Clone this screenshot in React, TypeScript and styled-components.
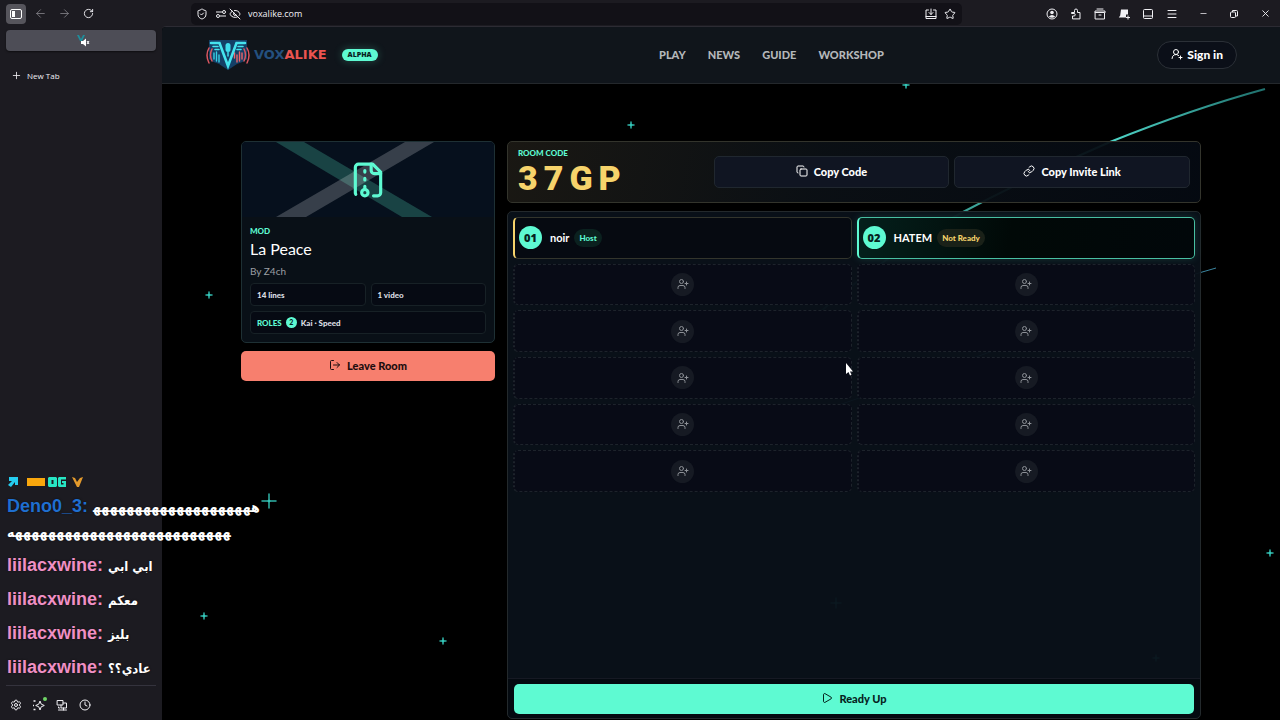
import React from "react";
import styled, { createGlobalStyle, css } from "styled-components";
import {
  ArrowLeft,
  ArrowRight,
  Clock,
  Copy,
  EyeOff,
  Link,
  LogOut,
  Menu,
  Minus,
  Play,
  Plus,
  RotateCw,
  Settings,
  ShieldCheck,
  Star,
  UserPlus,
  UserRoundPlus,
  X,
} from "lucide-react";

const mint = "#5efad2";
const gold = "#f6d36b";

const GlobalStyle = createGlobalStyle`
  * { box-sizing: border-box; }
  body {
    margin: 0;
    background: #000;
    color: #fff;
    font-family: Lato, "Open Sans", sans-serif;
  }
  button, input { font: inherit; color: inherit; margin: 0; }
  button { border: 0; padding: 0; background: none; cursor: pointer; }
  h1, h2, p, ul { margin: 0; padding: 0; }
  ul { list-style: none; }
  svg { display: block; flex: none; }
`;

/* ---------- browser window ---------- */

const Window = styled.div`
  position: relative;
  min-height: 100vh;
  display: flex;
  flex-direction: column;
  overflow: hidden;
  background: #1c1b21;
  font-family: "Open Sans", sans-serif;
`;

const Toolbar = styled.div`
  height: 26px;
  display: flex;
  align-items: center;
  padding: 1px 5px 0 0;
`;

const NavButtons = styled.div`
  width: 191px;
  display: flex;
  align-items: center;
  gap: 4px;
  padding-left: 6px;
`;

const IconButton = styled.button<{ $active?: boolean; $dim?: boolean }>`
  width: 20px;
  height: 20px;
  display: grid;
  place-items: center;
  border-radius: 4px;
  color: ${(p) => (p.$dim ? "#85848a" : "#f0f0f4")};
  background: ${(p) => (p.$active ? "#56555c" : "transparent")};
`;

const AddressBar = styled.div`
  flex: 1;
  max-width: 771px;
  height: 22px;
  display: flex;
  align-items: center;
  gap: 7px;
  padding: 0 6px 0 5px;
  border-radius: 5px;
  background: #121117;
  color: #f0f0f4;
`;

const SiteControls = styled.div`
  display: flex;
  gap: 2px;
`;

const AddressInput = styled.input`
  flex: 1;
  min-width: 0;
  border: 0;
  outline: 0;
  padding: 0;
  background: transparent;
  font-size: 9px;
  line-height: 12px;
`;

const ToolGroup = styled.div`
  margin-left: auto;
  display: flex;
  gap: 4px;
`;

const WindowGroup = styled.div`
  margin-left: 11px;
  display: flex;
  gap: 11px;
`;

const Body = styled.div`
  flex: 1;
  display: flex;
`;

const Sidebar = styled.aside`
  width: 162px;
  flex: none;
  display: flex;
  flex-direction: column;
  padding: 4px 6px 5px;
`;

const Tab = styled.button`
  height: 21px;
  display: grid;
  place-items: center;
  padding: 3px 0 0 6px;
  border-radius: 4px;
  background: #4d4d56;
  box-shadow: 0 1px 2px #0008;
`;

const NewTab = styled.button`
  height: 20px;
  margin-top: 14px;
  padding-left: 5px;
  display: flex;
  align-items: center;
  gap: 5px;
  font-size: 8px;
  color: #f0f0f4;
`;

const SidebarTools = styled.div`
  margin-top: auto;
  padding-top: 9px;
  display: flex;
  gap: 3px;
  border-top: 1px solid #34333d;
`;

/* ---------- site ---------- */

const Site = styled.div`
  position: relative;
  flex: 1;
  min-width: 0;
  display: flex;
  flex-direction: column;
  border-top: 1px solid #2c2b33;
  border-top-left-radius: 4px;
  background: #000;
  font-family: Lato, sans-serif;
`;

const Sky = styled.svg`
  position: absolute;
  left: 0;
  top: 0;
  overflow: visible;
`;

const SiteHeader = styled.header`
  position: relative;
  height: 57px;
  display: flex;
  align-items: center;
  justify-content: space-between;
  padding: 0 43px 0 44px;
  background: #10151b;
  border-bottom: 1px solid #24282c;
  border-top-left-radius: 4px;
`;

const Brand = styled.a`
  display: flex;
  align-items: center;
  padding-right: 8px;
  color: inherit;
  text-decoration: none;
`;

const Wordmark = styled.span`
  margin-left: 4px;
  font: bold 13px/16px "DejaVu Sans", sans-serif;
  color: #24507f;
  b { color: #ea5450; }
`;

const AlphaTag = styled.span`
  margin-left: 15px;
  height: 12px;
  padding: 0 6px;
  border-radius: 6px;
  background: ${mint};
  box-shadow: 0 0 8px #5efad240;
  color: #06231d;
  font: 800 7px/12px "Open Sans", sans-serif;
`;

const MainNav = styled.nav`
  display: flex;
  gap: 22px;
  a {
    color: #b4b7ba;
    font-size: 11px;
    font-weight: 900;
    line-height: 14px;
    text-decoration: none;
  }
`;

const SignIn = styled.button`
  height: 28px;
  padding: 0 13px 2px;
  display: flex;
  align-items: center;
  gap: 4px;
  border: 1px solid #2b3037;
  border-radius: 14px;
  background: #0b0f18;
  font-size: 12px;
  font-weight: 900;
`;

const Main = styled.main`
  position: relative;
  flex: 1;
  width: 100%;
  max-width: 960px;
  margin: 0 auto;
  padding: 57px 0 1px;
  display: grid;
  grid-template-columns: 254px minmax(0, 1fr);
  gap: 12px;
`;

const Column = styled.div`
  display: flex;
  flex-direction: column;
  gap: 8px;
`;

const panel = css`
  border: 1px solid #23292c;
  border-radius: 5px;
`;

const ModCard = styled.section`
  ${panel}
  border-color: #1e3034;
  overflow: hidden;
  background: #091017;
`;

const Cover = styled.div`
  height: 75px;
  display: grid;
  place-items: center;
  background: #06101d;
  color: ${mint};
  > svg { grid-area: 1 / 1; }
`;

const ModBody = styled.div`
  padding: 8px;
`;

const Label = styled.p`
  color: ${mint};
  font-size: 8px;
  font-weight: 900;
  line-height: 12px;
`;

const ModTitle = styled.h1`
  margin-top: 1px;
  font-size: 16px;
  font-weight: 400;
  line-height: 22px;
`;

const Author = styled.p`
  margin-top: 4px;
  color: #9b9fa4;
  font-size: 10px;
  line-height: 14px;
`;

const Facts = styled.div`
  margin-top: 5px;
  display: grid;
  grid-template-columns: 1fr 1fr;
  gap: 5px;
`;

const Fact = styled.div<{ $wide?: boolean }>`
  height: 23px;
  grid-column: ${(p) => (p.$wide ? "1 / -1" : "auto")};
  display: flex;
  align-items: center;
  gap: 4px;
  padding: 0 6px;
  border: 1px solid #172126;
  border-radius: 4px;
  background: #060a13;
  color: #dcdfe3;
  font-size: 8px;
  font-weight: 900;
`;

const Count = styled.span`
  width: 11px;
  height: 11px;
  border-radius: 50%;
  background: ${mint};
  color: #06231d;
  font-size: 7px;
  font-weight: 900;
  line-height: 11px;
  text-align: center;
`;

const ActionButton = styled.button<{ $tone: "coral" | "mint" | "dark" }>`
  height: ${(p) => (p.$tone === "dark" ? 32 : 30)}px;
  display: flex;
  align-items: center;
  justify-content: center;
  gap: 6px;
  padding-bottom: 2px;
  border-radius: 5px;
  font-size: 11px;
  font-weight: 900;
  ${(p) =>
    p.$tone === "coral"
      ? css`background: #f77f6e; color: #1c0d0f;`
      : p.$tone === "mint"
        ? css`background: ${mint}; color: #06231d;`
        : css`background: #101522; color: #fff; border: 1px solid #20272f;`}
`;

const CodePanel = styled.section`
  ${panel}
  height: 62px;
  display: grid;
  grid-template-columns: 2fr 5fr;
  align-items: center;
  gap: 5px;
  padding: 0 10px;
  border-color: #33342c;
  background: linear-gradient(100deg, #1b1914f2, #0b1015f2 45%, #050a12f2);
`;

const Code = styled.p`
  color: ${gold};
  font-family: Roboto, sans-serif;
  font-size: 34px;
  font-weight: 900;
  line-height: 38px;
  letter-spacing: 6px;
`;

const CodeActions = styled.div`
  display: grid;
  grid-template-columns: 1fr 1fr;
  gap: 5px;
`;

const RoomPanel = styled.section`
  ${panel}
  flex: 1;
  display: flex;
  flex-direction: column;
  background: #091119f5;
`;

const Slots = styled.ul`
  flex: none;
  min-height: 275px;
  margin: 5px;
  display: grid;
  grid-template-columns: 1fr 1fr;
  grid-template-rows: repeat(6, 1fr);
  gap: 5px;
`;

const slotBase = css`
  display: flex;
  align-items: center;
  border-radius: 5px;
`;

const Player = styled.li<{ $self?: boolean }>`
  ${slotBase}
  padding-left: 4px;
  border: 1px solid ${(p) => (p.$self ? "#48bfa2" : "#33352c")};
  border-left: 2px solid ${(p) => (p.$self ? mint : gold)};
  background: ${(p) => (p.$self ? "linear-gradient(100deg, #04201c, #010907 45%, #01070a)" : "#060a11")};
  box-shadow: ${(p) => (p.$self ? "0 0 8px #5efad226" : "none")};
`;

const Seat = styled.span`
  width: 23px;
  height: 23px;
  border-radius: 50%;
  background: ${mint};
  color: #06231d;
  font-family: "Open Sans", sans-serif;
  font-size: 11px;
  font-weight: 800;
  line-height: 23px;
  text-align: center;
`;

const PlayerName = styled.span`
  margin: 1px 5px 0 8px;
  font-size: 11px;
  font-weight: 700;
  line-height: 16px;
`;

const Status = styled.span<{ $tone: "mint" | "gold" }>`
  height: 18px;
  padding: 0 5px;
  border-radius: 9px;
  font-size: 8px;
  font-weight: 900;
  line-height: 18px;
  color: ${(p) => (p.$tone === "mint" ? mint : gold)};
  background: ${(p) => (p.$tone === "mint" ? "#0b211f" : "#1a2118")};
`;

const EmptySlot = styled.li`
  ${slotBase}
  justify-content: center;
  border: 1px dashed #1d232b;
  border-left: 2px dotted #1d232b;
  background: #080b16f0;
`;

const InviteButton = styled.button`
  width: 23px;
  height: 23px;
  display: grid;
  place-items: center;
  border-radius: 50%;
  background: #161a23;
  color: #8c9096;
`;

const RoomFooter = styled.footer`
  margin-top: auto;
  padding: 5px 6px 4px;
  border-top: 1px solid #161923;
  background: #040a10;
  border-radius: 0 0 5px 5px;
  display: grid;
`;

/* ---------- stream overlay ---------- */

const Chat = styled.div`
  position: absolute;
  left: 7px;
  bottom: 31px;
  width: 280px;
  font: bold 18px/25px "Liberation Sans", "DejaVu Sans Condensed", sans-serif;
  text-shadow: 0 0 2px #0009;
  pointer-events: none;
`;

const Badges = styled.div`
  height: 18px;
`;

const Message = styled.p<{ $color: string }>`
  margin-bottom: 9px;
  white-space: nowrap;
  b { color: ${(p) => p.$color}; }
`;

const Arabic = styled.span<{ $wide?: boolean }>`
  font-family: "DejaVu Sans Condensed", "DejaVu Sans", sans-serif;
  font-size: ${(p) => (p.$wide ? 14 : 13)}px;
  line-height: 20px;
`;

const Pointer = styled.svg`
  position: absolute;
  left: 845px;
  top: 363px;
  pointer-events: none;
`;

/* ---------- drawings ---------- */

const Crest = ({ size }: { size: number }) => (
  <svg width={size} height={(size * 30) / 44} viewBox="0 0 44 30" fill="none" strokeLinecap="round">
    <path d="M3 0h38v19q-5 4-10 5l-9 6-9-6q-5-1-10-5z" fill="#143f66" />
    <path d="M3 8q-4 7 0 15M6 9q-3 6 0 12" stroke="#d95661" strokeWidth="1.500" />
    <path d="M41 8q4 7 0 15M38 9q3 6 0 12" stroke="#d95661" strokeWidth="1.500" />
    <path d="M8 13v6M10.500 12v9M13 15v7" stroke="#36cfe4" strokeWidth="1.400" />
    <path d="M36 13v6M33.500 12v9M31 15v7M28.500 13v5" stroke="#ef6468" strokeWidth="1.400" />
    <path d="M5 3h8.500L22 26l8.500-23H39" stroke="#45e3ee" strokeWidth="2.600" strokeLinejoin="miter" />
    <path d="M7 6.500h5M9 9.500h4M37 6.500h-5M35 9.500h-4" stroke="#45e3ee" strokeWidth="1.600" />
    <rect x="19.500" y="3" width="5" height="9" rx="2.500" fill="#3fdcec" />
    <path d="M22 12v4" stroke="#3fdcec" strokeWidth="1.500" />
  </svg>
);

const ArchiveFile = () => (
  <svg width="38" height="38" viewBox="0 0 24 24" fill="none" stroke="currentColor" strokeWidth="2" strokeLinecap="round" strokeLinejoin="round">
    <path d="M14 2v4a2 2 0 0 0 2 2h4M10 7V6M10 12v-1M10 18v-2" />
    <path d="M15.500 22H18a2 2 0 0 0 2-2V7l-5-5H6a2 2 0 0 0-2 2v16a2 2 0 0 0 .274 1.010" />
    <circle cx="10" cy="20" r="2" />
  </svg>
);

const stars = [
  { x: 469, y: 98, r: 3 },
  { x: 744, y: 58, r: 3 },
  { x: 47, y: 268, r: 3 },
  { x: 107, y: 474, r: 7 },
  { x: 42, y: 589, r: 3 },
  { x: 281, y: 614, r: 3 },
  { x: 1108, y: 526, r: 3 },
  { x: 674, y: 576, r: 5 },
  { x: 994, y: 631, r: 3 },
];

const NightSky = () => (
  <Sky width="100%" height="100%" aria-hidden="true" fill="none">
    <defs>
      <linearGradient id="trail" gradientUnits="userSpaceOnUse" x1="1103" y1="62" x2="640" y2="330">
        <stop offset="0" stopColor="#1f6f6c" />
        <stop offset="0.3" stopColor="#4fd6c8" />
        <stop offset="1" stopColor="#4fd6c8" stopOpacity="0.4" />
      </linearGradient>
    </defs>
    <path d="M1103 62Q1030 82 948 115Q871 148 801 185Q721 228 641 300" stroke="url(#trail)" strokeWidth="2" />
    <path d="M1054 241Q1011 252 951 280Q831 325 671 380" stroke="#3c86a0" strokeWidth="1" />
    {stars.map((s) => (
      <g key={`${s.x}-${s.y}`} stroke="#35c9bb">
        <path d={`M${s.x - s.r} ${s.y}h${2 * s.r}M${s.x} ${s.y - s.r}v${2 * s.r}`} strokeWidth="1.500" strokeOpacity="0.9" strokeLinecap="round" />
        <circle cx={s.x} cy={s.y} r="1" fill="#35c9bb" />
      </g>
    ))}
  </Sky>
);

const Glyph = ({ d, size = 12, fill = "none" }: { d: string; size?: number; fill?: string }) => (
  <svg width={size} height={size} viewBox="0 0 24 24" fill={fill} stroke="currentColor" strokeWidth="2" strokeLinejoin="round" strokeLinecap="round">
    <path d={d} />
  </svg>
);

const emptySeats = Array.from({ length: 10 }, (_, i) => i + 3);

const heh = (n: number) => "ه".repeat(n);

export default function App() {
  return (
    <Window>
      <GlobalStyle />
      <Toolbar>
        <NavButtons>
          <IconButton $active aria-label="Sidebar">
            <svg width="12" height="10" viewBox="0 0 12 10">
              <rect x="0.500" y="0.500" width="11" height="9" rx="1.500" fill="none" stroke="#fff" />
              <path d="M2 2h3v6H2z" fill="#fff" />
            </svg>
          </IconButton>
          <IconButton $dim aria-label="Back"><ArrowLeft size={13} strokeWidth={1.5} /></IconButton>
          <IconButton $dim aria-label="Forward"><ArrowRight size={13} strokeWidth={1.5} /></IconButton>
          <IconButton aria-label="Reload"><RotateCw size={11} /></IconButton>
        </NavButtons>
        <AddressBar>
          <ShieldCheck size={12} />
          <SiteControls>
            <svg width="12" height="12" viewBox="0 0 12 12" fill="none" stroke="currentColor">
              <path d="M1 4h6M5 8h6" />
              <circle cx="9" cy="4" r="1.500" />
              <circle cx="3" cy="8" r="1.500" />
            </svg>
            <EyeOff size={12} />
          </SiteControls>
          <AddressInput aria-label="Address" defaultValue="voxalike.com" />
          <Glyph d="M7 4H2v17h20V4h-5M12 2v11M8 9l4 4 4-4M2 17h20" />
          <Star size={12} />
        </AddressBar>
        <ToolGroup>
          <IconButton aria-label="Account">
            <svg width="12" height="12" viewBox="0 0 12 12">
              <circle cx="6" cy="6" r="5" fill="none" stroke="currentColor" />
              <circle cx="6" cy="4.500" r="1.800" fill="currentColor" />
              <path d="M2.800 8.500q3.200-3 6.400 0Q6 11 2.800 8.500z" fill="currentColor" />
            </svg>
          </IconButton>
          <IconButton aria-label="Extensions">
            <Glyph d="M5 21v-5h3a2 2 0 0 0 0-5H3V9h6V5a3 3 0 0 1 6 0v4h5v12z" />
          </IconButton>
          <IconButton aria-label="Library"><Glyph d="M6 2h12M2 9V6h20v3M3 9h18v13H3zM10 14h4" /></IconButton>
          <IconButton aria-label="Capture">
            <svg width="12" height="12" viewBox="0 0 12 12">
              <path d="M3 1.500h7v5H8v3H.800l1.400-2z" fill="currentColor" />
              <path d="M10 7.500v4M8 9.500h4" stroke="currentColor" />
            </svg>
          </IconButton>
          <IconButton aria-label="Split view">
            <svg width="12" height="12" viewBox="0 0 12 12" fill="none" stroke="currentColor">
              <rect x="1.500" y="1.500" width="9" height="9" rx="1" />
              <path d="M1.500 8h9" />
            </svg>
          </IconButton>
          <IconButton aria-label="Menu"><Menu size={12} /></IconButton>
        </ToolGroup>
        <WindowGroup>
          <IconButton aria-label="Minimize"><Minus size={9} /></IconButton>
          <IconButton aria-label="Restore">
            <svg width="8" height="8" viewBox="0 0 8 8" fill="none" stroke="currentColor">
              <rect x="0.500" y="2" width="5" height="5.500" rx="1" />
              <path d="M2.500 2V.500h4a1 1 0 0 1 1 1V6h-2" />
            </svg>
          </IconButton>
          <IconButton aria-label="Close"><X size={11} /></IconButton>
        </WindowGroup>
      </Toolbar>

      <Body>
        <Sidebar>
          <Tab aria-label="Voxalike, muted">
            <svg width="14" height="14" viewBox="0 0 14 14">
              <path d="M0 0h2l2 4 2-4h2L5 6H3z" fill="#1f8d9b" />
              <path d="M4 6h2l3-2.500v8L6 9H4z" fill="#fff" />
              <path d="M10 6l2 3M12 6l-2 3" stroke="#fff" />
            </svg>
          </Tab>
          <NewTab><Plus size={11} strokeWidth={1.8} />New Tab</NewTab>
          <SidebarTools>
            <IconButton aria-label="Settings"><Settings size={12} /></IconButton>
            <IconButton aria-label="Assistant">
              <svg width="14" height="14" viewBox="0 0 14 14" fill="none" overflow="visible">
                <path d="M8 3l1.200 3.100L12.300 7.500 9.200 8.800 8 12 6.800 8.800 3.700 7.500l3.100-1.400z" stroke="currentColor" strokeLinejoin="round" />
                <path d="M1.500 3h2M1.500 11.500h2M1 7.500h1" stroke="currentColor" strokeWidth="1.300" />
                <circle cx="13" cy="1" r="2" fill="#6fd466" />
              </svg>
            </IconButton>
            <IconButton aria-label="Devices"><Glyph d="M3 3h11v9H3zM14 8h7v10H10v-6M5 22h16M15 18v4M5 16v2h3" /></IconButton>
            <IconButton aria-label="History"><Clock size={12} /></IconButton>
          </SidebarTools>
        </Sidebar>

        <Site>
          <NightSky />
          <SiteHeader>
            <Brand href="#" aria-label="Voxalike home">
              <Crest size={44} />
              <Wordmark>VOX<b>ALIKE</b></Wordmark>
              <AlphaTag>ALPHA</AlphaTag>
            </Brand>
            <MainNav>
              <a href="#play">PLAY</a>
              <a href="#news">NEWS</a>
              <a href="#guide">GUIDE</a>
              <a href="#workshop">WORKSHOP</a>
            </MainNav>
            <SignIn><UserRoundPlus size={12} />Sign in</SignIn>
          </SiteHeader>

          <Main>
            <Column>
              <ModCard>
                <Cover>
                  <svg width="100%" height="75" viewBox="0 0 252 75" preserveAspectRatio="none">
                    <path d="M34 0h28l128 75h-30z" fill="#5efad2" fillOpacity="0.22" />
                    <path d="M163 0h29L64 75H34z" fill="#fff" fillOpacity="0.2" />
                  </svg>
                  <ArchiveFile />
                </Cover>
                <ModBody>
                  <Label>MOD</Label>
                  <ModTitle>La Peace</ModTitle>
                  <Author>By Z4ch</Author>
                  <Facts>
                    <Fact>14 lines</Fact>
                    <Fact>1 video</Fact>
                    <Fact $wide><Label>ROLES</Label><Count>2</Count>Kai · Speed</Fact>
                  </Facts>
                </ModBody>
              </ModCard>
              <ActionButton $tone="coral"><LogOut size={12} />Leave Room</ActionButton>
            </Column>

            <Column>
              <CodePanel>
                <div>
                  <Label>ROOM CODE</Label>
                  <Code>37GP</Code>
                </div>
                <CodeActions>
                  <ActionButton $tone="dark"><Copy size={12} />Copy Code</ActionButton>
                  <ActionButton $tone="dark"><Link size={12} />Copy Invite Link</ActionButton>
                </CodeActions>
              </CodePanel>
              <RoomPanel>
                <Slots>
                  <Player>
                    <Seat>01</Seat>
                    <PlayerName>noir</PlayerName>
                    <Status $tone="mint">Host</Status>
                  </Player>
                  <Player $self>
                    <Seat>02</Seat>
                    <PlayerName>HATEM</PlayerName>
                    <Status $tone="gold">Not Ready</Status>
                  </Player>
                  {emptySeats.map((seat) => (
                    <EmptySlot key={seat}>
                      <InviteButton aria-label={`Invite to seat ${seat}`}><UserPlus size={12} /></InviteButton>
                    </EmptySlot>
                  ))}
                </Slots>
                <RoomFooter>
                  <ActionButton $tone="mint"><Play size={12} />Ready Up</ActionButton>
                </RoomFooter>
              </RoomPanel>
            </Column>
          </Main>
        </Site>
      </Body>

      <Chat>
        <Badges>
          <svg width="78" height="12" viewBox="0 0 78 12">
            <path d="M2 1h9v8H8V6L4 11 1 9l4-4H2z" fill="#25cdf0" />
            <path d="M20 2h18v8H20z" fill="#f9a70d" />
            <path d="M42 1h7l1 1v8l-1 1h-7l-1-1V2z" fill="#27e6c4" />
            <path d="M52 1h7v2.500h-5v5h2.500V7H55V5h4v6h-7l-1-1V2z" fill="#27e6c4" />
            <path d="M44.500 4h2v4h-2z" fill="#1c1b21" />
            <path d="M65 1l3 1 2 4 3-4 3-1-4 10h-2z" fill="#e39a2c" />
          </svg>
        </Badges>
        <Message $color="#1f6fd0">
          <b>Deno0_3:</b> <Arabic $wide>{heh(20) + "\u200d"}</Arabic>
          <br />
          <Arabic $wide>{"\u200d" + heh(27)}</Arabic>
        </Message>
        <Message $color="#ef8fc4"><b>liilacxwine:</b> <Arabic>ابي ابي</Arabic></Message>
        <Message $color="#ef8fc4"><b>liilacxwine:</b> <Arabic>معكم</Arabic></Message>
        <Message $color="#ef8fc4"><b>liilacxwine:</b> <Arabic>بليز</Arabic></Message>
        <Message $color="#ef8fc4"><b>liilacxwine:</b> <Arabic dir="rtl">عادي؟؟</Arabic></Message>
      </Chat>
      <Pointer width="8" height="13" viewBox="0 0 8 13">
        <path d="M1 0v11l2.500-2L5 12.500l1.500-.7L5 8.500h3z" fill="#fff" />
      </Pointer>
    </Window>
  );
}
